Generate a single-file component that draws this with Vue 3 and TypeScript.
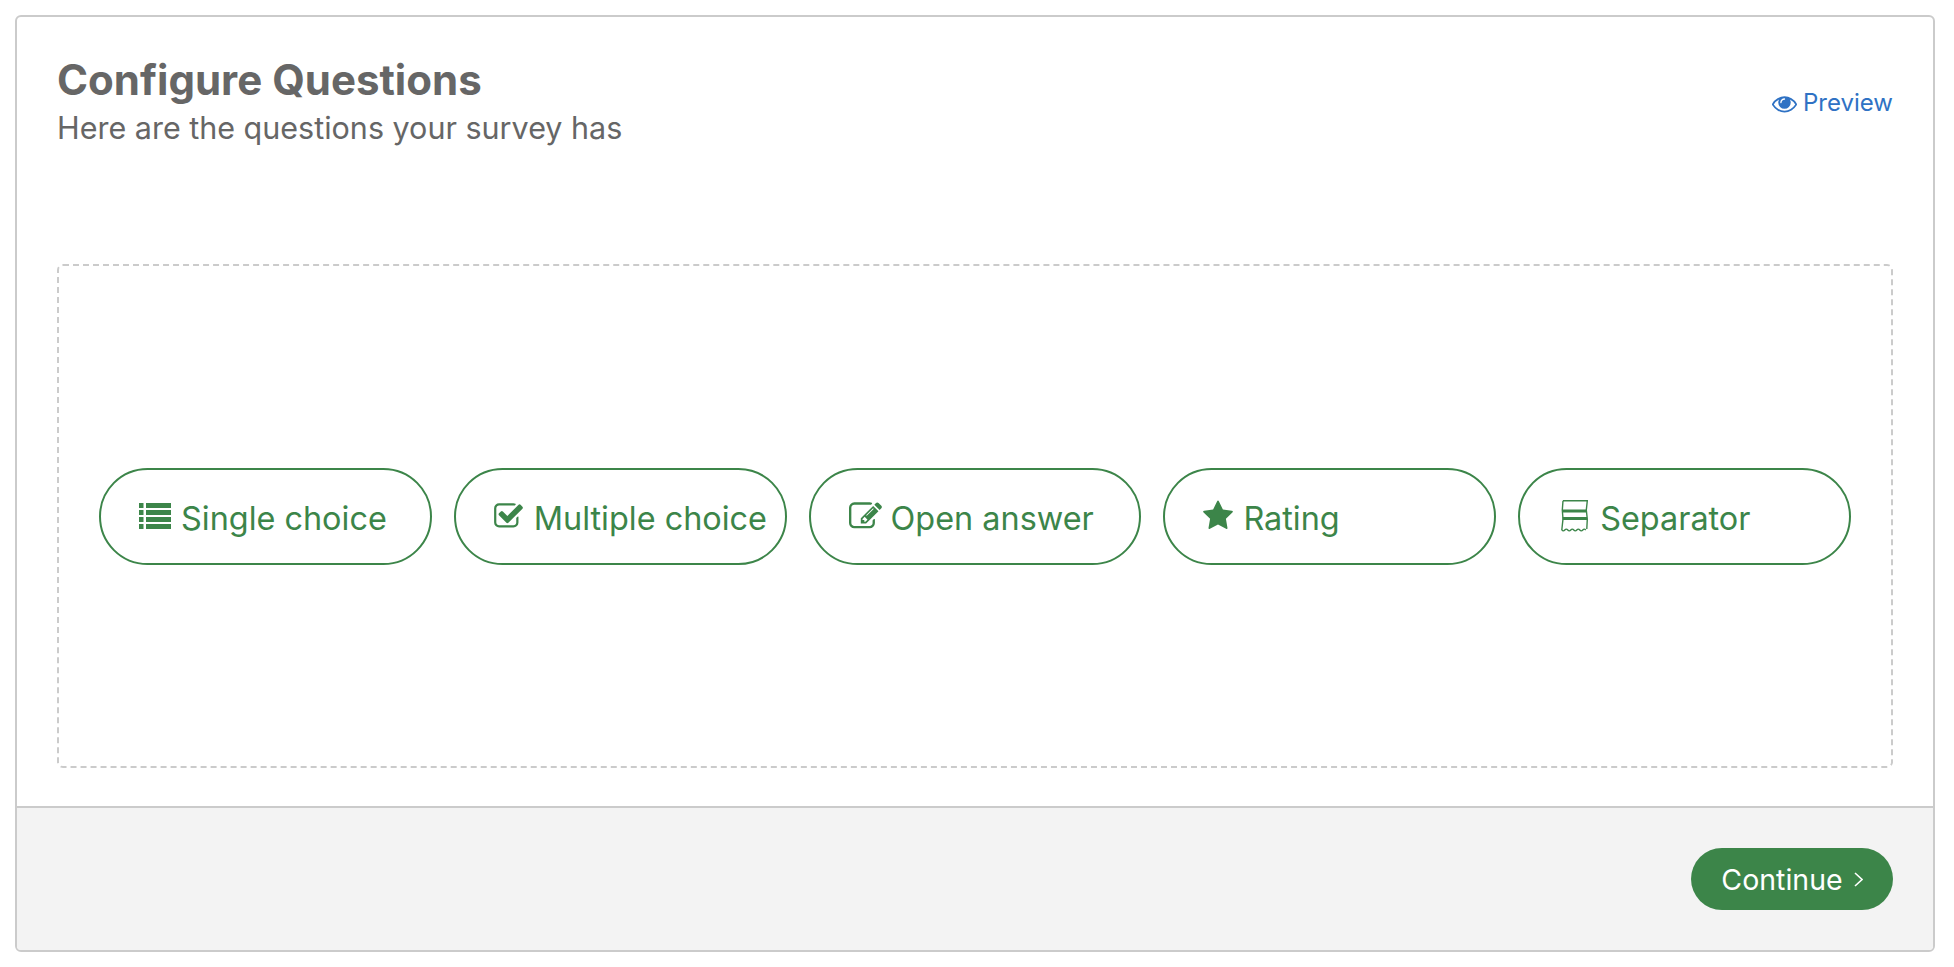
<script setup lang="ts">
interface QuestionType {
  label: string
  icon: string
}

const QUESTION_TYPES: QuestionType[] = [
  { label: 'Single choice', icon: 'list' },
  { label: 'Multiple choice', icon: 'check' },
  { label: 'Open answer', icon: 'edit' },
  { label: 'Rating', icon: 'star' },
  { label: 'Separator', icon: 'separator' },
]
</script>

<template>
  <div class="page">
    <section class="card">
      <div class="body">
        <header class="head">
          <div>
            <h1 class="title">Configure Questions</h1>
            <p class="subtitle">Here are the questions your survey has</p>
          </div>
          <a class="preview">
            <svg class="eye" viewBox="0 0 1792 1792" fill="currentColor">
              <path d="M1664 960q-152-236-381-353 61 104 61 225 0 185-131.500 316.500t-316.500 131.500-316.500-131.500-131.500-316.500q0-121 61-225-229 117-381 353 133 205 333.500 326.500t434.500 121.500 434.500-121.500 333.500-326.500zm-720-384q0-20-14-34t-34-14q-125 0-214.500 89.500t-89.500 214.500q0 20 14 34t34 14 34-14 14-34q0-86 61-147t147-61q20 0 34-14t14-34zm848 384q0 34-20 69-140 230-376.500 368.500t-499.500 138.500-499.500-139-376.500-368q-20-35-20-69t20-69q140-229 376.500-368t499.500-139 499.500 139 376.500 368q20 35 20 69z" />
            </svg>
            Preview
          </a>
        </header>

        <div class="dropzone">
          <button v-for="q in QUESTION_TYPES" :key="q.label" class="pill" type="button">
            <span class="slot" :class="`slot-${q.icon}`">
              <svg v-if="q.icon === 'list'" class="ico-list" viewBox="0 0 32 26" fill="currentColor">
                <rect x="0" y="0" width="4.500" height="5" />
                <rect x="7" y="0" width="25" height="5" />
                <rect x="0" y="7" width="4.500" height="5" />
                <rect x="7" y="7" width="25" height="5" />
                <rect x="0" y="14" width="4.500" height="5" />
                <rect x="7" y="14" width="25" height="5" />
                <rect x="0" y="21" width="4.500" height="5" />
                <rect x="7" y="21" width="25" height="5" />
              </svg>
              <svg v-else-if="q.icon === 'check'" class="ico-check" viewBox="0 0 1792 1792" fill="currentColor">
                <path d="M1472 930v318q0 119-84.500 203.500t-203.500 84.500h-832q-119 0-203.500-84.500t-84.500-203.500v-832q0-119 84.500-203.500t203.500-84.500h832q63 0 117 25 15 7 18 23 3 17-9 29l-49 49q-10 10-23 10-3 0-9-2-23-6-45-6h-832q-66 0-113 47t-47 113v832q0 66 47 113t113 47h832q66 0 113-47t47-113v-254q0-13 9-22l64-64q10-10 23-10 6 0 12 3 20 8 20 29zm231-489l-814 814q-24 24-57 24t-57-24l-430-430q-24-24-24-57t24-57l110-110q24-24 57-24t57 24l263 263 647-647q24-24 57-24t57 24l110 110q24 24 24 57t-24 57z" />
              </svg>
              <svg v-else-if="q.icon === 'edit'" class="ico-edit" viewBox="0 0 1792 1792" fill="currentColor">
                <path d="M888 1184l116-116-152-152-116 116v56h96v96h56zm440-720q-16-16-33 1l-350 350q-17 17-1 33t33-1l350-350q17-17 1-33zm80 594v190q0 119-84.500 203.500t-203.500 84.500h-832q-119 0-203.500-84.500t-84.500-203.500v-832q0-119 84.500-203.500t203.500-84.500h832q63 0 117 25 15 7 18 23 3 17-9 29l-49 49q-14 14-32 8-23-6-45-6h-832q-66 0-113 47t-47 113v832q0 66 47 113t113 47h832q66 0 113-47t47-113v-126q0-13 9-22l64-64q15-15 35-7t20 29zm-96-738l288 288-672 672h-288v-288zm444 132l-92 92-288-288 92-92q28-28 68-28t68 28l152 152q28 28 28 68t-28 68z" />
              </svg>
              <svg v-else-if="q.icon === 'star'" class="ico-star" viewBox="0 0 1792 1792" fill="currentColor">
                <path d="M1728 647q0 22-26 48l-363 354 86 500q1 7 1 20 0 21-10.500 35.500t-30.500 14.500q-19 0-40-12l-449-236-449 236q-22 12-40 12-21 0-31.500-14.500t-10.500-35.500q0-6 2-20l86-500-364-354q-25-27-25-48 0-37 56-46l502-73 225-455q19-41 49-41t49 41l225 455 502 73q56 9 56 46z" />
              </svg>
              <svg v-else class="ico-separator" viewBox="0 0 27 32" fill="none" stroke="currentColor">
                <path d="M2 .7H26.300L25.300 10L26.300 19L25.800 29" stroke-width="1.400" />
                <path d="M2 .7L1.300 10L2 19L.8 30" stroke-width="1.400" />
                <path d="M1.500 11H26M1.500 18.500H26" stroke-width="2.800" />
                <path d="M.8 30q1.500 1.800 3 0t3 0 3 0 3 0 3 0 3 0 3 0 3 0" stroke-width="1.400" />
              </svg>
            </span>
            <span class="pill-label">{{ q.label }}</span>
          </button>
        </div>
      </div>

      <footer class="foot">
        <button class="continue" type="button">
          Continue
          <svg class="chevron" viewBox="0 0 9 15" fill="none" stroke="currentColor" stroke-width="1.600">
            <path d="M1 1L8 7.500L1 14" />
          </svg>
        </button>
      </footer>
    </section>
  </div>
</template>

<style scoped>
.page {
  padding: 15px 19px 15px 15px;
  font-family: Inter, "Liberation Sans", sans-serif;
}

.card {
  height: 937px;
  box-sizing: border-box;
  display: flex;
  flex-direction: column;
  border: 2px solid #cbcbcb;
  border-radius: 6px;
  overflow: hidden;
  background: #fff;
}

.body {
  flex: 1;
  display: flex;
  flex-direction: column;
  padding: 39px 40px 38px 40px;
}

.head {
  display: flex;
  justify-content: space-between;
  height: 208px;
  align-items: flex-start;
}

.title {
  margin: 0;
  font-size: 42px;
  line-height: 48px;
  font-weight: 700;
  color: #666;
}

.subtitle {
  margin: 4px 0 0;
  font-size: 30.500px;
  line-height: 40px;
  color: #666;
}

.preview {
  display: flex;
  align-items: center;
  gap: 6px;
  margin-top: 32px;
  font-size: 24px;
  line-height: 30px;
  color: #2f72c4;
}

.eye {
  width: 25px;
  height: 25px;
}

.dropzone {
  flex: 1;
  display: grid;
  grid-template-columns: repeat(5, 1fr);
  gap: 22px;
  align-items: center;
  padding: 0 40px;
  border: 2px dashed #cbcbcb;
  border-radius: 6px;
}

.pill {
  display: flex;
  align-items: center;
  height: 97px;
  padding: 0 0 0 38px;
  border: 2px solid #3c8549;
  border-radius: 49px;
  background: #fff;
  color: #3c8549;
  font-family: inherit;
  font-size: 32.400px;
  white-space: nowrap;
}

.pill-label {
  position: relative;
  top: 2px;
}

.slot {
  flex: none;
  width: 42px;
  display: flex;
  align-items: center;
}

.slot-check {
  width: 40px;
}

.slot-star {
  width: 40px;
}

.slot svg {
  display: block;
}

.ico-list {
  width: 32px;
  height: 26px;
}

.ico-check {
  width: 31px;
  height: 31px;
  margin-left: -1px;
}

.ico-edit {
  width: 33px;
  height: 33px;
}

.ico-star {
  width: 32px;
  height: 32px;
  margin-left: -1px;
}

.ico-separator {
  width: 27px;
  height: 32px;
  margin-left: 3px;
}

.foot {
  height: 144px;
  flex: none;
  box-sizing: border-box;
  display: flex;
  justify-content: flex-end;
  align-items: center;
  padding-right: 40px;
  border-top: 2px solid #cbcbcb;
  background: #f3f3f3;
}

.continue {
  display: flex;
  align-items: center;
  gap: 11px;
  justify-content: center;
  width: 202px;
  height: 62px;
  border: 0;
  border-radius: 31px;
  background: #3c8549;
  color: #fff;
  font-family: inherit;
  font-size: 28.500px;
}

.chevron {
  width: 9px;
  height: 15px;
}
</style>
